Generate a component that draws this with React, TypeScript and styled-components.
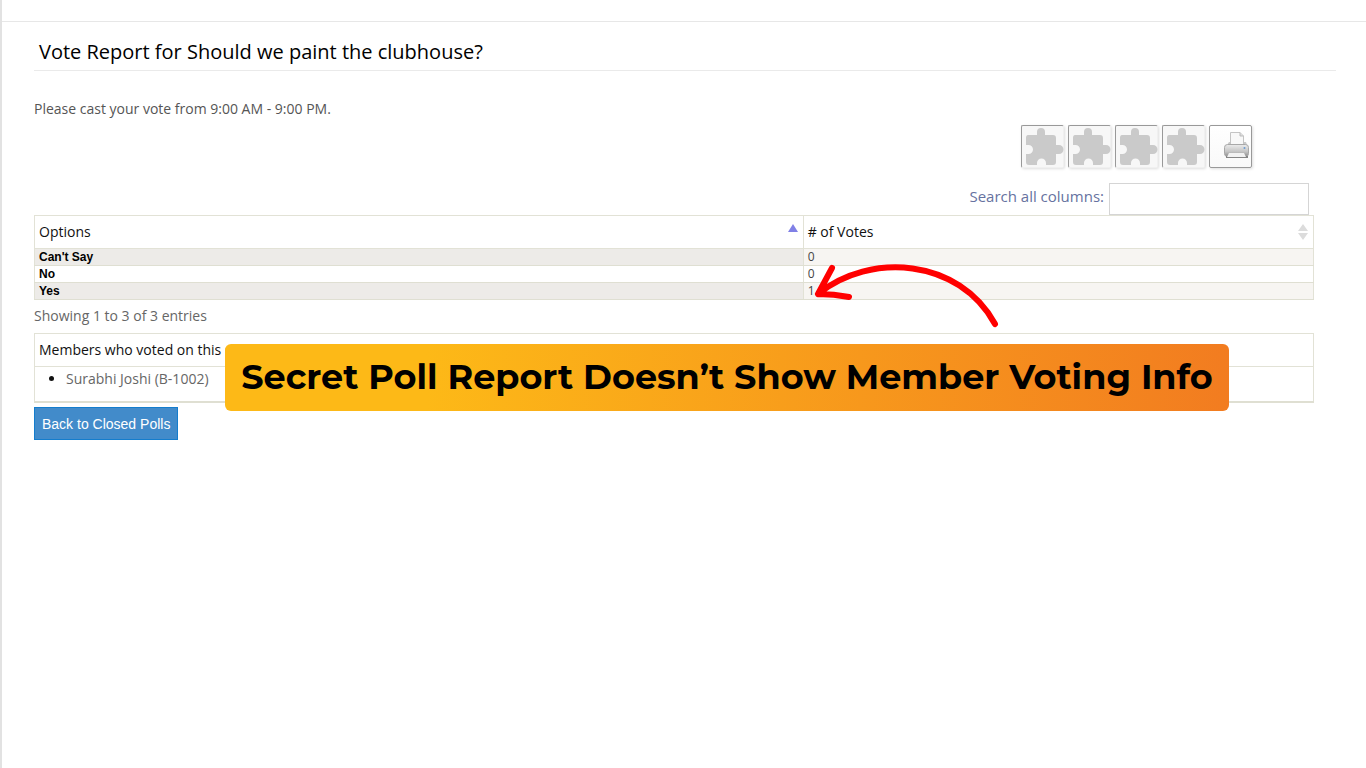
import React from "react";
import styled, { createGlobalStyle } from "styled-components";

const GlobalStyle = createGlobalStyle`
  *, *::before, *::after { box-sizing: border-box; }
  body {
    margin: 0;
    background: #fff;
    color: #666;
    font: 400 14px/20px "Open Sans", "Noto Sans", sans-serif;
  }
`;

const Page = styled.div`
  position: relative;
  min-height: 100vh;
  border-left: 2px solid #e2e2e2;
`;

const TopBar = styled.header`
  height: 22px;
  border-bottom: 1px solid #e7e7e7;
`;

const Content = styled.main`
  padding: 16px 30px 0 32px;
`;

const Title = styled.h1`
  margin: 0;
  padding: 0 5px 5px;
  border-bottom: 1px solid #eaeaea;
  color: #000;
  font-size: 20px;
  font-weight: 400;
  line-height: 27px;
`;

const Report = styled.section`
  margin-right: 22px;
`;

const Intro = styled.p`
  margin: 0;
  padding-top: 28px;
  color: #555;
`;

const Toolbar = styled.div`
  display: flex;
  justify-content: flex-end;
  gap: 4px;
  margin: 6px 62px 15px 0;
`;

const ToolButton = styled.button<{ $raised?: boolean }>`
  display: block;
  width: 43px;
  height: 43px;
  padding: 0;
  border: 1px solid ${(p) => (p.$raised ? "#999" : "#f0f0f0")};
  border-top-color: #999;
  border-left-color: #999;
  border-radius: 2px;
  background: ${(p) =>
    p.$raised ? "linear-gradient(#fff, #f9f9f9)" : "#f7f7f7"};
  box-shadow: 1px 1px 3px #ddd;

  svg { display: block; }
`;

const Search = styled.label`
  display: flex;
  justify-content: flex-end;
  gap: 5px;
  margin-right: 5px;
  color: #6672a0;
  font-size: 15px;
  line-height: 26px;
`;

const SearchInput = styled.input`
  width: 200px;
  height: 32px;
  padding: 4px 8px;
  border: 1px solid #d5d5d5;
  background: #fff;
  font: inherit;
`;

const Table = styled.table`
  width: 100%;
  border-collapse: collapse;
  table-layout: fixed;
  border: 1px solid #e2e2d6;
`;

const HeadCell = styled.th<{ $width?: string }>`
  width: ${(p) => p.$width ?? "auto"};
  height: 33px;
  padding: 0 5px 1px 4px;
  border: 1px solid #e2e2d6;
  color: #111;
  font-size: 14px;
  font-weight: 400;
  text-align: left;
`;

const SortButton = styled.button`
  display: flex;
  align-items: center;
  justify-content: space-between;
  width: 100%;
  padding: 0;
  border: 0;
  background: none;
  color: inherit;
  font: inherit;
  text-align: left;
`;

const Row = styled.tr<{ $odd: boolean }>`
  background: ${(p) => (p.$odd ? "#f7f5f2" : "#fff")};

  th { background: ${(p) => (p.$odd ? "#edebe8" : "#fff")}; }
`;

const OptionCell = styled.th`
  padding: 0 4px;
  border-bottom: 1px solid #dfdfd2;
  color: #000;
  font: 700 12px/16px "Liberation Sans", Arial, sans-serif;
  text-align: left;
`;

const CountCell = styled.td`
  padding: 0 4px;
  border-bottom: 1px solid #dfdfd2;
  border-left: 1px solid #e2e2d6;
  color: #444;
  font-size: 12px;
  line-height: 16px;
`;

const Info = styled.p`
  margin: 0;
  padding: 6px 0 7px;
`;

const MembersCell = styled.td`
  height: 35px;
  padding: 2px 4px 12px;
  border-bottom: 2px solid #dfdfd2;
`;

const MemberList = styled.ul`
  margin: 0;
  padding-left: 27px;

  li::marker { color: #111; }
`;

const BackButton = styled.button`
  display: block;
  margin-top: 4px;
  height: 33px;
  padding: 0 7px;
  border: 1px solid #147dcd;
  background: #428bca;
  color: #fff;
  font: 400 14px/20px "Liberation Sans", Arial, sans-serif;
`;

const Banner = styled.div`
  position: absolute;
  top: 344px;
  left: 223px;
  width: 1004px;
  height: 67px;
  border-radius: 6px;
  background: linear-gradient(90deg, #fdb917 20%, #f27c20);
  color: #000;
  font: 700 35px/66px Montserrat, Inter, sans-serif;
  text-align: center;
  white-space: nowrap;
`;

const Arrow = styled.svg`
  position: absolute;
  top: 260px;
  left: 808px;
`;

const options = [
  { name: "Can't Say", votes: 0 },
  { name: "No", votes: 0 },
  { name: "Yes", votes: 1 },
];

const tools = ["Copy", "CSV", "Excel", "PDF"];

function PuzzleIcon() {
  return (
    <svg width="42" height="42" viewBox="0 0 42 42" aria-hidden="true">
      <path
        fill="#cacaca"
        d="M6 9H15V6A4 4 0 0 1 23 6V9H31Q34 9 34 12V19H37A4 4 0 0 1 37 28H34V36Q34 39 31 39H24V37A4.500 4.500 0 0 0 15 37V39H7Q4 39 4 36V28H6.500A4.500 4.500 0 0 0 6.500 19H4V12Q4 9 6 9Z"
      />
    </svg>
  );
}

function PrinterIcon() {
  return (
    <svg width="41" height="41" viewBox="0 0 41 41" aria-hidden="true">
      <defs>
        <linearGradient id="printer-body" x1="0" y1="0" x2="0" y2="1">
          <stop offset="0" stopColor="#ececec" />
          <stop offset="0.6" stopColor="#c4c4c4" />
          <stop offset="1" stopColor="#8c8c8c" />
        </linearGradient>
      </defs>
      <path d="M19 16H36L38 22H15Z" fill="#c8c8c8" />
      <path d="M20.500 6.500H30L33.500 10V19H20.500Z" fill="#f8f8f8" stroke="#c4c4c4" />
      <path d="M30 6.500V10H33.500" fill="#ddd" stroke="#bbb" />
      <rect x="14.500" y="18.500" width="24" height="12" rx="3" fill="url(#printer-body)" stroke="#a8a8a8" />
      <path d="M16 31H38" stroke="#858585" strokeWidth="2" />
      <path d="M19 27H34L36 31H17Z" fill="#f2f2f2" />
      <circle cx="34.500" cy="22" r="1" fill="#6b9bd1" />
    </svg>
  );
}

function SortedUp() {
  return (
    <svg width="10" height="16" viewBox="0 0 10 16" aria-hidden="true">
      <path d="M5 0L10 8H0Z" fill="#8080e6" />
    </svg>
  );
}

function SortBoth() {
  return (
    <svg width="10" height="16" viewBox="0 0 10 16" aria-hidden="true">
      <path d="M5 0L10 7H0ZM0 9H10L5 16Z" fill="#dcdcdc" />
    </svg>
  );
}

export default function App() {
  return (
    <Page>
      <GlobalStyle />
      <TopBar />
      <Content>
        <Title>Vote Report for Should we paint the clubhouse?</Title>
        <Report>
          <Intro>Please cast your vote from 9:00 AM - 9:00 PM.</Intro>
          <Toolbar>
            {tools.map((tool) => (
              <ToolButton key={tool} type="button" aria-label={tool}>
                <PuzzleIcon />
              </ToolButton>
            ))}
            <ToolButton type="button" aria-label="Print" $raised>
              <PrinterIcon />
            </ToolButton>
          </Toolbar>
          <Search htmlFor="search">
            Search all columns:
            <SearchInput id="search" type="text" />
          </Search>
          <Table>
            <thead>
              <tr>
                <HeadCell $width="60.1%" scope="col">
                  <SortButton type="button">Options <SortedUp /></SortButton>
                </HeadCell>
                <HeadCell scope="col">
                  <SortButton type="button"># of Votes <SortBoth /></SortButton>
                </HeadCell>
              </tr>
            </thead>
            <tbody>
              {options.map((option, i) => (
                <Row key={option.name} $odd={i % 2 === 0}>
                  <OptionCell scope="row">{option.name}</OptionCell>
                  <CountCell>{option.votes}</CountCell>
                </Row>
              ))}
            </tbody>
          </Table>
          <Info>Showing 1 to 3 of 3 entries</Info>
          <Table>
            <thead>
              <tr>
                <HeadCell scope="col">Members who voted on this secret poll</HeadCell>
              </tr>
            </thead>
            <tbody>
              <tr>
                <MembersCell>
                  <MemberList>
                    <li>Surabhi Joshi (B-1002)</li>
                  </MemberList>
                </MembersCell>
              </tr>
            </tbody>
          </Table>
          <BackButton type="button">Back to Closed Polls</BackButton>
        </Report>
      </Content>
      <Banner>Secret Poll Report Doesn’t Show Member Voting Info</Banner>
      <Arrow width="196" height="72" viewBox="810 260 196 72" aria-hidden="true">
        <path
          d="M995 324C959 258 870 252 818 294M832 268L818 294Q834 294 849 297"
          fill="none"
          stroke="#f00"
          strokeWidth="6"
          strokeLinecap="round"
          strokeLinejoin="round"
        />
      </Arrow>
    </Page>
  );
}
